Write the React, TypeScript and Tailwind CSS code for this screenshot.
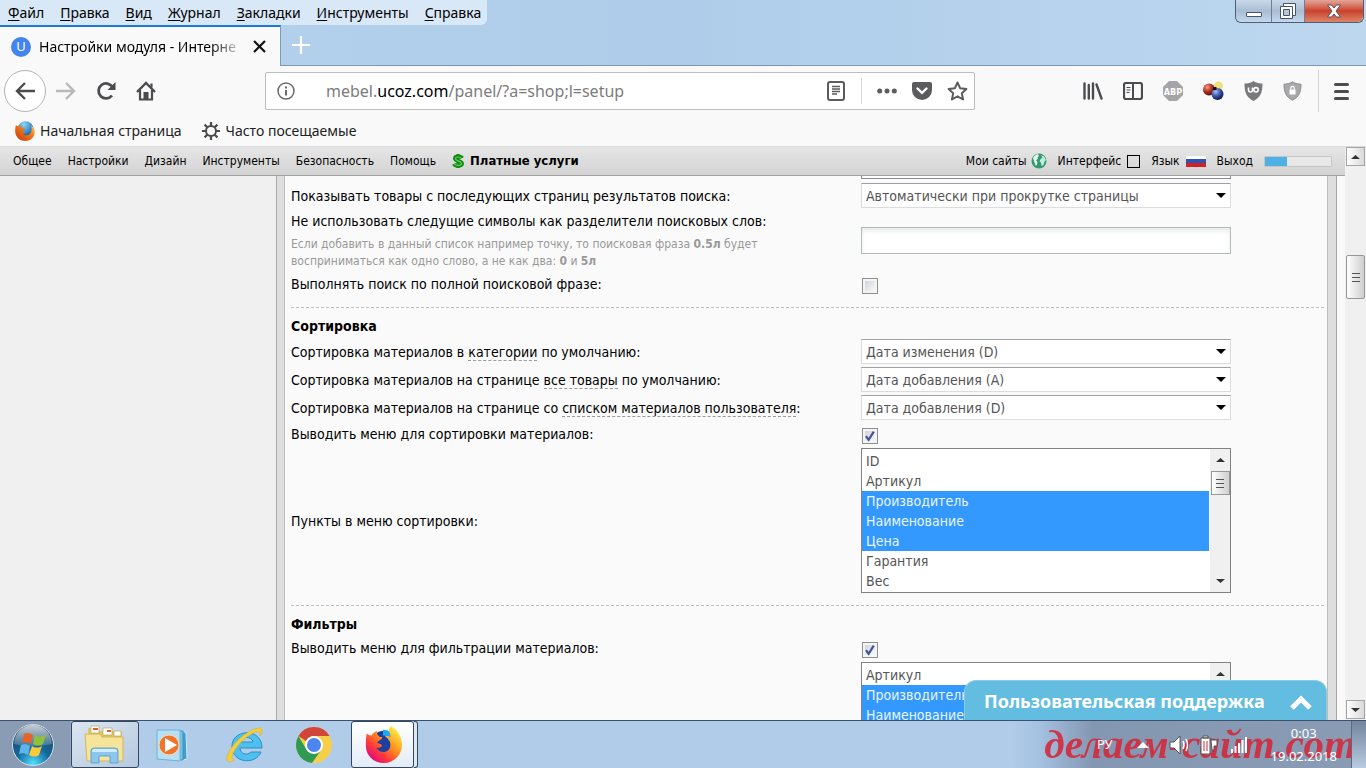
import React, { useState } from "react";

const fileMenu = ["Файл", "Правка", "Вид", "Журнал", "Закладки", "Инструменты", "Справка"];
const panelMenu = ["Общее", "Настройки", "Дизайн", "Инструменты", "Безопасность", "Помощь"];

const sortFields = ["ID", "Артикул", "Производитель", "Наименование", "Цена", "Гарантия", "Вес"];
const filterFields = ["Артикул", "Производитель", "Наименование", "Цена", "Гарантия", "Вес", "ID"];

/* ---------- form parts ---------- */

const Row = ({ id, label, hint, children }: any) => (
  <div className="grid min-h-[22px] grid-cols-[570px_minmax(0,370px)] items-center">
    <div>
      {label && (
        <label htmlFor={id} className="block text-[14px] leading-5 text-black">
          {label}
        </label>
      )}
      {hint}
    </div>
    <div>{children}</div>
  </div>
);

const SelectBox = ({ id, options }: { id: string; options: string[] }) => (
  <div className="relative">
    <select
      id={id}
      className="block h-[25px] w-full appearance-none border border-[#dcdcdc] border-t-[#a0a0a0] bg-white px-1 text-[14px] leading-5 text-[#555] outline-none"
    >
      {options.map((o) => (
        <option key={o}>{o}</option>
      ))}
    </select>
    <svg className="pointer-events-none absolute top-[9px] right-[5px]" width="10" height="7" viewBox="0 0 10 7">
      <path d="M0 1h10L5 6z" fill="#000" />
    </svg>
  </div>
);

const CheckBox = ({ id, initial }: { id: string; initial?: boolean }) => {
  const [checked, setChecked] = useState(!!initial);
  return (
    <div className="relative mt-1 ml-px size-4">
      <input
        id={id}
        type="checkbox"
        checked={checked}
        onChange={(e) => setChecked(e.target.checked)}
        className="block size-4 appearance-none border border-[#8e8f8f] bg-linear-to-br from-[#c9ced3] to-white shadow-[inset_0_0_0_2px_#f4f4f4]"
      />
      {checked && (
        <svg className="pointer-events-none absolute inset-0" width="16" height="16" viewBox="0 0 16 16">
          <path d="M4 8.2l2.6 3.6L11.8 3.6" fill="none" stroke="#42529a" strokeWidth="2.2" />
        </svg>
      )}
    </div>
  );
};

const ScrollArrow = ({ down }: { down?: boolean }) => (
  <svg width="9" height="6" viewBox="0 0 9 6">
    <path d={down ? "M0 1h9L4.5 5z" : "M0 5h9L4.5 1z"} fill="#333" />
  </svg>
);

const Grip = () => (
  <span className="flex flex-col gap-[3px]">
    <span className="block h-px w-2 bg-[#555]" />
    <span className="block h-px w-2 bg-[#555]" />
    <span className="block h-px w-2 bg-[#555]" />
  </span>
);

const ListBox = ({ id, name, options }: { id: string; name: string; options: string[] }) => (
  <div className="flex h-[145px] border border-[#828282] bg-white">
    <select
      id={id}
      aria-label={name}
      multiple
      size={7}
      defaultValue={["Производитель", "Наименование", "Цена"]}
      className="h-full min-w-0 flex-1 overflow-hidden py-0.5 text-[14px] text-[#555] outline-none [scrollbar-width:none]"
    >
      {options.map((o) => (
        <option
          key={o}
          className="h-5 px-1 pt-0.5 pb-0 checked:bg-[linear-gradient(#3399ff,#3399ff)] checked:[-webkit-text-fill-color:#eaf6ff]"
        >
          {o}
        </option>
      ))}
    </select>
    <div className="flex w-[21px] flex-col items-center border-l border-white bg-[#f0f0f0]">
      <span className="flex h-[22px] items-center">
        <ScrollArrow />
      </span>
      <span className="flex h-6 w-[19px] items-center justify-center border border-[#979797] bg-linear-to-r from-white to-[#cfcfcf]">
        <Grip />
      </span>
      <span className="mt-auto flex h-[22px] items-center">
        <ScrollArrow down />
      </span>
    </div>
  </div>
);

const Dashed = ({ children }: any) => (
  <a href="#" className="border-b border-dashed border-[#999]">
    {children}
  </a>
);

const Divider = () => <hr className="mt-3 mb-2 border-t border-dashed border-[#bfbfbf]" />;

const Heading = ({ children }: any) => (
  <h2 className="text-[14px] leading-5 font-bold text-black">{children}</h2>
);

/* ---------- browser chrome ---------- */

const FirefoxLogo = ({ size }: { size: number }) => (
  <svg width={size} height={size} viewBox="0 0 40 40">
    <defs>
      <linearGradient id="fox" x1="0.9" y1="0.1" x2="0.2" y2="0.9">
        <stop offset="0" stopColor="#fff14a" />
        <stop offset="0.4" stopColor="#ff9a1c" />
        <stop offset="0.75" stopColor="#ff3a3a" />
        <stop offset="1" stopColor="#e0107a" />
      </linearGradient>
    </defs>
    <circle cx="21" cy="19" r="14" fill="#1f3f9e" />
    <path d="M20 7c5 0 8 3 9 8" stroke="#1ea7f2" strokeWidth="6" fill="none" />
    <path
      d="M3 8c2 2 3 2 5 2 1-2 3-4 6-5-1 3 0 4 2 6 1 1 3 0 3 1 0 3-5 3-5 6 2 1 5 1 5 3-1 2-4 2-6 2 3 5 9 6 13 2 4-5 1-12-4-14 3-1 5 0 6 1 0-4-2-6-2-9 1-1 2-2 2-3 8 4 12 12 12 20 0 10-8 19-19 19S2 31 2 21C2 16 2 12 3 8z"
      fill="url(#fox)"
    />
  </svg>
);

// the older Firefox icon used by the "home page" bookmark
const FirefoxOldLogo = () => (
  <svg width="20" height="20" viewBox="0 0 20 20">
    <defs>
      <radialGradient id="earth" cx="0.4" cy="0.2" r="0.9">
        <stop offset="0" stopColor="#8fd4f5" />
        <stop offset="0.6" stopColor="#2f7fc4" />
        <stop offset="1" stopColor="#133a7c" />
      </radialGradient>
      <linearGradient id="tail" x1="0" y1="1" x2="1" y2="0">
        <stop offset="0" stopColor="#c8380f" />
        <stop offset="0.6" stopColor="#ee7a17" />
        <stop offset="1" stopColor="#ffd24a" />
      </linearGradient>
    </defs>
    <circle cx="10.5" cy="8.5" r="8.3" fill="url(#earth)" />
    <path
      d="M1 4c.6.8 1.500 1.200 2.500 1.200C4.500 4.500 5.500 4.300 6.500 4.500c-.5 1-.3 1.800.8 2.600 1 .5 2 .2 2 .8 0 1-1.800 1.200-2 2.200 1 .8 2.700.4 3.200 1.200-.8 1.200-2 1.300-3 1.200 1.500 2 5 2.600 7.300.5 2.300-2.200 2.200-6 1.200-8.500C18.500 6 20 8.500 19.800 11.500 19.300 16.500 15.200 20 10.200 20 4.500 20 .4 15.800.2 10.500.1 8 .4 6 1 4z"
      fill="url(#tail)"
    />
  </svg>
);

const WindowButtons = () => (
  <div className="mr-0.5 flex h-[23px] rounded-b-md border border-t-0 border-[#4d5f76] shadow-[inset_0_0_1px_#fff]">
    <button aria-label="Свернуть" className="flex w-9 items-end justify-center rounded-bl-md border-r border-[#6b7f97] bg-linear-to-b from-[#c9d9ea] via-[#a9bdd3] to-[#c4d8ec] pb-[5px]">
      <span className="block h-[5px] w-4 rounded-[1px] border border-[#45546b] bg-white" />
    </button>
    <button aria-label="Развернуть" className="flex w-[33px] items-center justify-center border-r border-[#6b7f97] bg-linear-to-b from-[#c9d9ea] via-[#a9bdd3] to-[#c4d8ec]">
      <svg width="18" height="18" viewBox="0 0 18 18" fill="#fff" stroke="#45546b">
        <path d="M4.5 1.5h12v12h-12z" />
        <path d="M1.5 4.5h12v12h-12z" />
        <path d="M4.5 7.5h6v6h-6z" fill="#b4c6da" />
      </svg>
    </button>
    <button aria-label="Закрыть" className="flex w-[58px] items-center justify-center rounded-br-md bg-linear-to-b from-[#e3a497] via-[#c9402b] to-[#dd8468]">
      <svg width="16" height="14" viewBox="0 0 16 14">
        <path d="M1.5 1h4L8 4l2.5-3h4L10 7l4.5 6h-4L8 10l-2.5 3h-4L6 7z" fill="#fff" stroke="#54525d" />
      </svg>
    </button>
  </div>
);

const TitleBar = () => (
  <header className="bg-[#b2d0eb] bg-linear-to-r from-[#b4d2ec] via-[#afcdea] to-[#bdd7ef]">
    <div className="flex h-[25px] items-start justify-between">
      <nav className="flex h-[25px] gap-4 rounded-br-md bg-[#d9e8f6] pr-1.5 pl-2 text-[14px] leading-[26px] text-black">
        {fileMenu.map((m) => (
          <button key={m}>
            <span className="underline underline-offset-2">{m[0]}</span>
            {m.slice(1)}
          </button>
        ))}
      </nav>
      <WindowButtons />
    </div>
    <div className="flex h-[41px] items-stretch">
      <div className="flex w-[281px] items-center border-t-2 border-r border-t-[#1a7ad8] border-r-[#8299b3] bg-[#f9f9fa] pl-[11px]">
        <span className="flex size-5 shrink-0 items-center justify-center rounded-full bg-[#4484ee] text-[13px] leading-none text-white">
          U
        </span>
        <span className="ml-2 w-[206px] text-[14px] leading-5 whitespace-nowrap text-black [mask-image:linear-gradient(to_right,#000_83%,transparent)]">
          Настройки модуля - Интерне
        </span>
        <button aria-label="Закрыть вкладку" className="ml-2">
          <svg width="13" height="13" viewBox="0 0 13 13">
            <path d="M1 1l11 11M12 1L1 12" stroke="#111" strokeWidth="2.2" />
          </svg>
        </button>
      </div>
      <div className="flex flex-1 items-center border-b border-[#7f97b2] pl-[11px]">
        <button aria-label="Новая вкладка">
          <svg width="18" height="18" viewBox="0 0 18 18">
            <path d="M9 0v18M0 9h18" stroke="#fff" strokeWidth="2.2" />
          </svg>
        </button>
      </div>
    </div>
  </header>
);

const NavBar = () => (
  <div className="flex h-[50px] items-center bg-[#f9f9fa] pl-1 text-[#4c4c4f]">
    <button aria-label="Назад" className="flex size-[42px] items-center justify-center rounded-full border border-[#b5b5b5] bg-white">
      <svg width="20" height="18" viewBox="0 0 20 18" fill="none" stroke="currentColor" strokeWidth="2.4">
        <path d="M20 9H2M10 1L2 9l8 8" />
      </svg>
    </button>
    <button aria-label="Вперёд" className="ml-2.5 text-[#b8b8b9]">
      <svg width="20" height="18" viewBox="0 0 20 18" fill="none" stroke="currentColor" strokeWidth="2.4">
        <path d="M0 9h18M10 1l8 8-8 8" />
      </svg>
    </button>
    <button aria-label="Обновить" className="ml-5">
      <svg width="21" height="20" viewBox="0 0 21 20" fill="none" stroke="currentColor" strokeWidth="2.8">
        <path d="M16 14.500A7.500 7.500 0 1 1 16.500 6" />
        <path d="M19.5 1v8h-8z" fill="currentColor" stroke="none" />
      </svg>
    </button>
    <button aria-label="Домой" className="ml-[19px]">
      <svg width="20" height="20" viewBox="0 0 20 20" fill="none" stroke="currentColor" strokeWidth="2.2">
        <path d="M1 11l9-9 9 9" strokeWidth="2.4" />
        <path d="M4 9v9.500h12V9M15.500 2.500v4" />
        <path d="M7.500 11h5v8h-5z" fill="currentColor" stroke="none" />
      </svg>
    </button>
    <div className="ml-[109px] flex h-[38px] w-[710px] shrink items-center rounded-[2px] border border-[#bdbdbd] bg-white pr-1.5 pl-[11px]">
      <svg width="18" height="18" viewBox="0 0 18 18" fill="none" stroke="#6a6a6c" strokeWidth="1.5">
        <circle cx="9" cy="9" r="8" />
        <path d="M9 8v5.500M9 4.500v2" strokeWidth="2" />
      </svg>
      <div className="ml-[31px] flex-1 text-[16px] leading-6 whitespace-nowrap text-[#7c7c7c]">
        mebel.<span className="text-black">ucoz.com</span>/panel/?a=shop;l=setup
      </div>
      <svg width="18" height="20" viewBox="0 0 18 20" fill="none" stroke="#5c5c5e">
        <rect x="1" y="1" width="16" height="18" rx="2" strokeWidth="2" />
        <path d="M5 5.500h8M5 8h8M5 10.500h8M5 13h5" strokeWidth="1.3" />
      </svg>
      <span className="ml-4 h-[26px] w-px bg-[#d8d8d8]" />
      <svg className="ml-[15px]" width="20" height="6" viewBox="0 0 20 6" fill="#5c5c5e">
        <circle cx="2.7" cy="3" r="2.5" />
        <circle cx="10" cy="3" r="2.5" />
        <circle cx="17.3" cy="3" r="2.5" />
      </svg>
      <svg className="ml-[15px]" width="20" height="18" viewBox="0 0 20 18">
        <path d="M2 0h16a2 2 0 0 1 2 2v6a10 10 0 0 1-20 0V2a2 2 0 0 1 2-2z" fill="#5c5c5e" />
        <path d="M5.500 6.500L10 10.800l4.500-4.300" fill="none" stroke="#fff" strokeWidth="2.4" strokeLinecap="round" />
      </svg>
      <svg className="ml-[15px]" width="21" height="20" viewBox="0 0 21 20">
        <path
          d="M10.500 1.500l2.700 5.800 6.200.7-4.600 4.200 1.300 6.300-5.600-3.200-5.600 3.200 1.300-6.300L1.600 8l6.200-.7z"
          fill="none"
          stroke="#5c5c5e"
          strokeWidth="2"
          strokeLinejoin="round"
        />
      </svg>
    </div>
    <div className="ml-auto flex h-full items-center gap-5 pr-4">
      <svg width="20" height="18" viewBox="0 0 20 18" stroke="currentColor" strokeWidth="2.4" strokeLinecap="round">
        <path d="M1.500 1.500v15M5.800 3v13.500M10 1.500v15M13.500 2.500l5 14" />
      </svg>
      <svg width="20" height="18" viewBox="0 0 20 18" fill="none" stroke="currentColor">
        <rect x="1" y="1" width="18" height="16" rx="2" strokeWidth="2.2" />
        <path d="M10 1v16" strokeWidth="2" />
        <path d="M3.500 5.500h4M3.500 8h4M3.500 10.500h3" strokeWidth="1.2" />
      </svg>
      <svg width="20" height="20" viewBox="0 0 20 20">
        <path d="M6 0h8l6 6v8l-6 6H6l-6-6V6z" fill="#a5a5a7" />
        <text x="10" y="13.5" textAnchor="middle" fontSize="9" fontWeight="700" fill="#fff" fontFamily="DejaVu Sans Condensed, sans-serif">
          ABP
        </text>
      </svg>
      <svg width="21" height="20" viewBox="0 0 21 20">
        <defs>
          <radialGradient id="red" cx="0.35" cy="0.3" r="0.8">
            <stop offset="0" stopColor="#f0a08c" />
            <stop offset="0.5" stopColor="#b02c1a" />
            <stop offset="1" stopColor="#3c0a04" />
          </radialGradient>
          <radialGradient id="blue" cx="0.35" cy="0.3" r="0.8">
            <stop offset="0" stopColor="#a9bdf4" />
            <stop offset="0.5" stopColor="#3552a4" />
            <stop offset="1" stopColor="#080e2c" />
          </radialGradient>
        </defs>
        <circle cx="15.5" cy="5" r="4.5" fill="#f0e27a" />
        <circle cx="6" cy="8.5" r="6" fill="url(#red)" />
        <circle cx="14.5" cy="13" r="6" fill="url(#blue)" />
        <path d="M10 6h3.500v3H10z" fill="#111" />
      </svg>
      <svg width="19" height="20" viewBox="0 0 19 20">
        <path d="M9.500 0C12 2 15.500 2.500 18.500 2.500 18.500 11 17 16 9.500 20 2 16 .5 11 .5 2.500 3.500 2.500 7 2 9.500 0z" fill="#7a7a7c" />
        <path d="M4.500 6.500V9a2 2 0 0 0 4 0V6.500" fill="none" stroke="#fff" strokeWidth="1.6" />
        <circle cx="12" cy="8.800" r="2.200" fill="none" stroke="#fff" strokeWidth="1.6" />
      </svg>
      <svg width="19" height="20" viewBox="0 0 19 20">
        <path d="M9.500.8C12 2.500 15 3.200 18 3.200 18 11 16 16 9.500 19.200 3 16 1 11 1 3.200 4 3.200 7 2.500 9.500.8z" fill="#a9a9ab" stroke="#8d8d8f" />
        <rect x="6.500" y="8.500" width="6" height="5" fill="#fff" />
        <path d="M7.800 8.500V7a1.700 1.700 0 0 1 3.400 0v1.500" fill="none" stroke="#fff" strokeWidth="1.2" />
      </svg>
      <div className="-ml-1 flex h-[42px] items-center border-l border-[#d4d4d4] pl-3.5">
        <button aria-label="Меню" className="flex flex-col gap-1 px-px py-1">
          <span className="block h-[3px] w-[15px] rounded-full bg-[#4c4c4f]" />
          <span className="block h-[3px] w-[15px] rounded-full bg-[#4c4c4f]" />
          <span className="block h-[3px] w-[15px] rounded-full bg-[#4c4c4f]" />
        </button>
      </div>
    </div>
  </div>
);

const Bookmarks = () => (
  <div className="flex h-[31px] items-start border-b border-[#dcdcdc] bg-[#f9f9fa] pt-1 pl-[15px] text-[14px] leading-[22px] text-[#222]">
    <a href="#" className="flex items-center gap-[5px]">
      <FirefoxOldLogo />
      Начальная страница
    </a>
    <a href="#" className="ml-5 flex items-center gap-1.5">
      <svg width="18" height="18" viewBox="0 0 18 18" fill="none" stroke="#4a4a4a">
        <circle cx="9" cy="9" r="5" strokeWidth="2" />
        <path
          d="M9 0v4M9 14v4M0 9h4M14 9h4M2.600 2.600l2.900 2.900M12.500 12.500l2.900 2.900M2.600 15.400l2.900-2.900M12.500 5.500l2.900-2.900"
          strokeWidth="2.2"
        />
      </svg>
      Часто посещаемые
    </a>
  </div>
);

/* ---------- control panel ---------- */

const PanelBar = () => (
  <nav className="flex h-[29px] items-center gap-4 border-b border-[#a2a2a2] bg-linear-to-b from-[#e6e6e6] to-[#d3d3d3] pr-[13px] pl-[13px] text-[12px] whitespace-nowrap text-black">
    {panelMenu.map((m) => (
      <a key={m} href="#">
        {m}
      </a>
    ))}
    <a href="#" className="flex items-center gap-1.5 text-[13px] font-bold">
      <svg width="12" height="14" viewBox="0 0 12 14">
        <path d="M6 0v14" stroke="#128a12" strokeWidth="3" />
        <path d="M10 4.200C9 2 3 2 3 4.500S10 7 10 9.800 3 12 2 9.800" fill="none" stroke="#128a12" strokeWidth="4" />
        <path d="M9.500 4.200C8.500 2.500 3.500 2.500 3.500 4.700S9.500 7 9.500 9.600 3.500 11.800 2.500 9.800" fill="none" stroke="#5fd35f" strokeWidth="1.2" />
      </svg>
      Платные услуги
    </a>
    <div className="ml-auto flex items-center gap-[11px]">
      <a href="#" className="flex items-center gap-1">
        Мои сайты
        <svg width="16" height="16" viewBox="0 0 16 16">
          <circle cx="8" cy="8" r="7.5" fill="#2f9a6b" />
          <path d="M2 5c1-2 3-3.500 5-4l1 2-1.500 1 .5 1.500L5 7.500 6.500 9l-.5 3-1.500.5L3.500 9.500z" fill="#e4f7ee" />
          <path d="M10 2l3 1.500L15 7l-1.500 1.500L12.500 12 10.500 13 10 10 8.500 8 10 5.500l1.500-.5z" fill="#c4ecd9" />
        </svg>
      </a>
      <a href="#" className="flex items-center gap-1.5">
        Интерфейс
        <span className="block size-[13px] border border-black" />
      </a>
      <a href="#" className="flex items-center gap-1.5">
        Язык
        <svg width="20" height="11" viewBox="0 0 20 11">
          <path d="M0 0h20v4H0z" fill="#fff" />
          <path d="M0 3h20v4H0z" fill="#2a55b5" />
          <path d="M0 7h20v4H0z" fill="#d6201f" />
        </svg>
      </a>
      <a href="#">Выход</a>
      <div className="h-[11px] w-[68px] rounded-[1px] border border-[#c6c6c6] bg-[#e8e8e8]">
        <div className="h-full bg-[#4fb0e6]" style={{ width: "33%" }} />
      </div>
    </div>
  </nav>
);

const PageScrollbar = () => (
  <div className="flex w-[21px] flex-col items-center bg-[#f0f0f0]">
    <button aria-label="Вверх" className="flex size-[19px] items-center justify-center border border-[#a5a5a5] bg-linear-to-r from-white to-[#d9d9d9]">
      <ScrollArrow />
    </button>
    <div className="flex-[89_1_0%]" />
    <div className="flex h-11 w-[19px] items-center justify-center rounded-[2px] border border-[#979797] bg-linear-to-r from-white to-[#cfcfcf]">
      <Grip />
    </div>
    <div className="flex-[401_1_0%]" />
    <button aria-label="Вниз" className="mb-px flex size-[19px] items-center justify-center border border-[#a5a5a5] bg-linear-to-r from-white to-[#d9d9d9]">
      <ScrollArrow down />
    </button>
  </div>
);

const SettingsForm = () => (
  <form className="min-w-0 flex-1 pr-[3px] pl-1.5">
    <div className="ml-[570px] h-[3px] max-w-[370px] border border-t-0 border-[#8a8a94] bg-white" />
    <div className="mt-1 flex flex-col gap-[3px]">
      <Row id="paging" label="Показывать товары с последующих страниц результатов поиска:">
        <SelectBox id="paging" options={["Автоматически при прокрутке страницы", "По нажатию кнопки"]} />
      </Row>
      <Row
        id="symbols"
        label="Не использовать следущие символы как разделители поисковых слов:"
        hint={
          <p className="mt-[5px] max-w-[500px] text-[12px] leading-[17px] text-[#999]">
            Если добавить в данный список например точку, то поисковая фраза <b>0.5л</b> будет
            <br />
            восприниматься как одно слово, а не как два: <b>0</b> и <b>5л</b>
          </p>
        }
      >
        <input
          id="symbols"
          type="text"
          className="block h-[27px] w-full border border-[#b4b9b9] bg-white px-1 text-[14px] shadow-[inset_0_3px_4px_#e6ebea] outline-none"
        />
      </Row>
      <Row id="phrase" label="Выполнять поиск по полной поисковой фразе:">
        <CheckBox id="phrase" />
      </Row>
    </div>
    <Divider />
    <div className="flex flex-col gap-[3px]">
      <Heading>Сортировка</Heading>
      <Row id="sortcat" label={<>Сортировка материалов в <Dashed>категории</Dashed> по умолчанию:</>}>
        <SelectBox id="sortcat" options={["Дата изменения (D)", "Дата изменения (A)"]} />
      </Row>
      <Row id="sortall" label={<>Сортировка материалов на странице <Dashed>все товары</Dashed> по умолчанию:</>}>
        <SelectBox id="sortall" options={["Дата добавления (A)", "Дата добавления (D)"]} />
      </Row>
      <Row id="sortuser" label={<>Сортировка материалов на странице со <Dashed>списком материалов пользователя</Dashed>:</>}>
        <SelectBox id="sortuser" options={["Дата добавления (D)", "Дата добавления (A)"]} />
      </Row>
      <Row id="sortmenu" label="Выводить меню для сортировки материалов:">
        <CheckBox id="sortmenu" initial />
      </Row>
      <Row id="sortitems" label="Пункты в меню сортировки:">
        <ListBox id="sortitems" name="Пункты в меню сортировки" options={sortFields} />
      </Row>
    </div>
    <Divider />
    <div className="flex flex-col gap-[3px]">
      <Heading>Фильтры</Heading>
      <Row id="filtermenu" label="Выводить меню для фильтрации материалов:">
        <CheckBox id="filtermenu" initial />
      </Row>
      <Row id="filteritems">
        <ListBox id="filteritems" name="Пункты в меню фильтров" options={filterFields} />
      </Row>
    </div>
  </form>
);

const SupportTab = () => (
  <button className="absolute right-[18px] bottom-0 flex h-10 w-[363px] items-center justify-between rounded-t-xl border border-b-0 border-[#8ccde6] bg-[#62bde0] pr-3.5 pl-[19px] pt-0.5 font-['Noto_Sans',sans-serif] text-[18px] font-bold whitespace-nowrap text-white">
    Пользовательская поддержка
    <svg width="22" height="16" viewBox="0 0 22 16">
      <path d="M2 14l9-9 9 9" fill="none" stroke="#fff" strokeWidth="5" />
    </svg>
  </button>
);

/* ---------- taskbar ---------- */

const StartOrb = () => (
  <svg width="44" height="44" viewBox="0 0 44 44">
    <defs>
      <radialGradient id="orb" cx="0.5" cy="0.95" r="0.9">
        <stop offset="0" stopColor="#4fe0ff" />
        <stop offset="0.45" stopColor="#12699c" />
        <stop offset="1" stopColor="#23415f" />
      </radialGradient>
      <linearGradient id="gloss" x1="0" y1="0" x2="0" y2="1">
        <stop offset="0" stopColor="#fff" stopOpacity="0.75" />
        <stop offset="1" stopColor="#fff" stopOpacity="0.15" />
      </linearGradient>
    </defs>
    <circle cx="22" cy="22" r="20.5" fill="url(#orb)" stroke="#cfe0ee" />
    <path d="M3 21a19 19 0 0 1 38 0c-12 3-26 3-38 0z" fill="url(#gloss)" />
    <path d="M13 11c3-2 6-1 9 1l-2 9c-3-2-6-2-9-1z" fill="#e8632a" />
    <path d="M24 12c3 2 7 2 11 0l-3 9c-3 2-7 2-10 0z" fill="#8fc13c" />
    <path d="M10 22c3-1 6-1 9 1l-2 9c-3-2-6-2-9-1z" fill="#5fb4ea" />
    <path d="M21 23c3 2 7 2 10 0l-3 9c-3 2-6 2-10 0z" fill="#fbc93a" />
  </svg>
);

const Explorer = () => (
  <svg width="44" height="40" viewBox="0 0 44 40">
    <path d="M5 3h10l2 3h22v30H5z" fill="#e2c765" />
    <path d="M8 1h8v7H8zM20 3h9v7h-9zM31 6h7v5h-7z" fill="#fff" stroke="#b59b45" strokeWidth="0.6" />
    <path d="M10 3h5v2h-5zM24 5h4v2h-4z" fill="#d8622c" />
    <path d="M2 9h15l2 3h21v24H4z" fill="#f5e49a" stroke="#d3b75b" />
    <path d="M8 38V26q0-3 3-3h21q3 0 3 3v12h-8v-7H16v7z" fill="#8cc6ec" stroke="#5ca4d4" />
    <path d="M9 27q0-3 2-3h21q2 0 2 3z" fill="#d3ecfa" />
  </svg>
);

const MediaPlayer = () => (
  <svg width="36" height="36" viewBox="0 0 36 36">
    <path d="M24 5h7l1 27-8 2z" fill="#3f9fd0" stroke="#cfeaf6" />
    <path d="M20 4h8v29h-8z" fill="#7cc4e4" stroke="#3f8fb8" />
    <path d="M2 3h23v31l-23-2z" fill="#b7e0f4" stroke="#6cb3d6" />
    <circle cx="14" cy="18" r="10" fill="#f0742a" stroke="#fcd4b4" />
    <path d="M10 11l12 7-12 7z" fill="#fff" />
  </svg>
);

const InternetExplorer = () => (
  <svg width="42" height="40" viewBox="0 0 42 40">
    <path
      d="M38 23H16c0 6 7 8 11 4h10c-5 13-29 12-29-6C8 4 38 2 38 23zM16 17h13c-1-6-12-6-13 0z"
      fill="#4fc0ee"
      stroke="#2a8ec8"
      fillRule="evenodd"
    />
    <path d="M10 35c-6 4-9 1-6-6C9 17 25 4 35 3c4 0 4 4 1 8 1-4-1-5-4-4C22 10 9 24 8 32c0 2 1 3 2 3z" fill="#f2cf3f" stroke="#d9ae25" strokeWidth="0.6" />
  </svg>
);

const Chrome = () => (
  <svg width="38" height="38" viewBox="0 0 38 38">
    <circle cx="19" cy="19" r="18" fill="#f7ce4a" />
    <path d="M3.400 10A18 18 0 0 1 34.600 10H19a9 9 0 0 0-8 5z" fill="#d2453a" />
    <path d="M3.400 10a18 18 0 0 0 13.600 27l9.500-13.500a9 9 0 0 1-15.300-.5z" fill="#2f9a52" />
    <circle cx="19" cy="19" r="9" fill="#fff" />
    <circle cx="19" cy="19" r="7" fill="#4a86ee" />
  </svg>
);

const Taskbar = () => (
  <footer className="relative flex h-12 shrink-0 items-center border-t border-[#3c5070] bg-[linear-gradient(to_right,#8a9cb4_70px,#b0cce9_72px,#b0cce9_74%,#a6c2e2_76%,#8497b2_80%,#8a9cb4)]">
    <button aria-label="Пуск" className="ml-[11px]">
      <StartOrb />
    </button>
    <button aria-label="Проводник" className="ml-4 flex h-[47px] w-[68px] items-center justify-center rounded-[3px] border border-[#34465e] bg-linear-to-br from-[#dbe6f1] to-[#b5c8de]">
      <Explorer />
    </button>
    <button aria-label="Проигрыватель" className="ml-4">
      <MediaPlayer />
    </button>
    <button aria-label="Internet Explorer" className="ml-[33px]">
      <InternetExplorer />
    </button>
    <button aria-label="Chrome" className="ml-[29px]">
      <Chrome />
    </button>
    <button aria-label="Firefox" className="ml-[18px] flex h-[47px] w-[63px] items-center justify-center rounded-[3px] border border-[#34465e] bg-linear-to-b from-white to-[#e3ecf6]">
      <FirefoxLogo size={38} />
    </button>
    <span className="h-[47px] w-1 rounded-r-[3px] border border-l-0 border-[#34465e] bg-[#dde8f3]" />
    <span className="absolute right-2.5 bottom-0 font-['Liberation_Serif',serif] text-[41px] leading-[48px] font-bold whitespace-nowrap text-[#d32a3c] italic opacity-90">
      делаем-сайт.com
    </span>
    <div className="relative ml-auto flex h-full items-center text-white">
      <span className="text-[13px]">РУ</span>
      <svg className="ml-6" width="12" height="6" viewBox="0 0 12 6">
        <path d="M0 6l6-6 6 6z" fill="#fff" />
      </svg>
      <svg className="ml-5" width="22" height="20" viewBox="0 0 22 20">
        <path d="M1 7h4l6-6v18l-6-6H1z" fill="#fff" stroke="#555" />
        <path d="M14 6q2 4 0 8M17 4q3 6 0 12" fill="none" stroke="#fff" strokeWidth="1.5" />
      </svg>
      <svg className="ml-2" width="20" height="20" viewBox="0 0 20 20">
        <path d="M2 3h9v16H2zM4 1h5v2H4z" fill="#fff" stroke="#555" />
        <path d="M5 6v10M8 6v10" stroke="#d32a3c" />
        <path d="M12 5h6v6h-3v4h-2z" fill="#fff" stroke="#555" />
      </svg>
      <svg className="ml-3" width="16" height="16" viewBox="0 0 16 16" fill="#fff">
        <path d="M0 12h2v4H0zM3.500 9h2v7h-2zM7 6h2v10H7zM10.500 3h2v13h-2zM14 0h2v16h-2z" />
      </svg>
      <div className="ml-6 text-center text-[13px] leading-[23px]">
        <div>0:03</div>
        <div>19.02.2018</div>
      </div>
      <button aria-label="Показать рабочий стол" className="ml-3.5 h-full w-[15px] border-l border-[#5a6b82] bg-linear-to-b from-[#74869e] to-[#b9cbe0]" />
    </div>
  </footer>
);

export default function App() {
  return (
    <div className="flex h-screen flex-col overflow-hidden bg-[#f9f9fa] font-['Noto_Sans',sans-serif]">
      <TitleBar />
      <NavBar />
      <Bookmarks />
      <main className="flex min-h-0 flex-1 font-['DejaVu_Sans_Condensed','DejaVu_Sans',sans-serif]">
        <div className="relative flex min-w-0 flex-1 flex-col">
          <PanelBar />
          <div className="flex min-h-0 flex-1 overflow-hidden bg-[#fafafa]">
            <aside className="w-[277px] shrink-0 border-r border-[#a9a9a9] bg-[#f0f0f0]" />
            <div className="w-2 shrink-0 border-r border-[#bdbdbd] bg-[#dedede]" />
            <SettingsForm />
            <div className="mr-2 w-2.5 shrink-0 border-r border-l border-r-[#a5a5a5] border-l-[#bdbdbd] bg-[#dedede]" />
          </div>
          <SupportTab />
        </div>
        <PageScrollbar />
      </main>
      <Taskbar />
    </div>
  );
}
